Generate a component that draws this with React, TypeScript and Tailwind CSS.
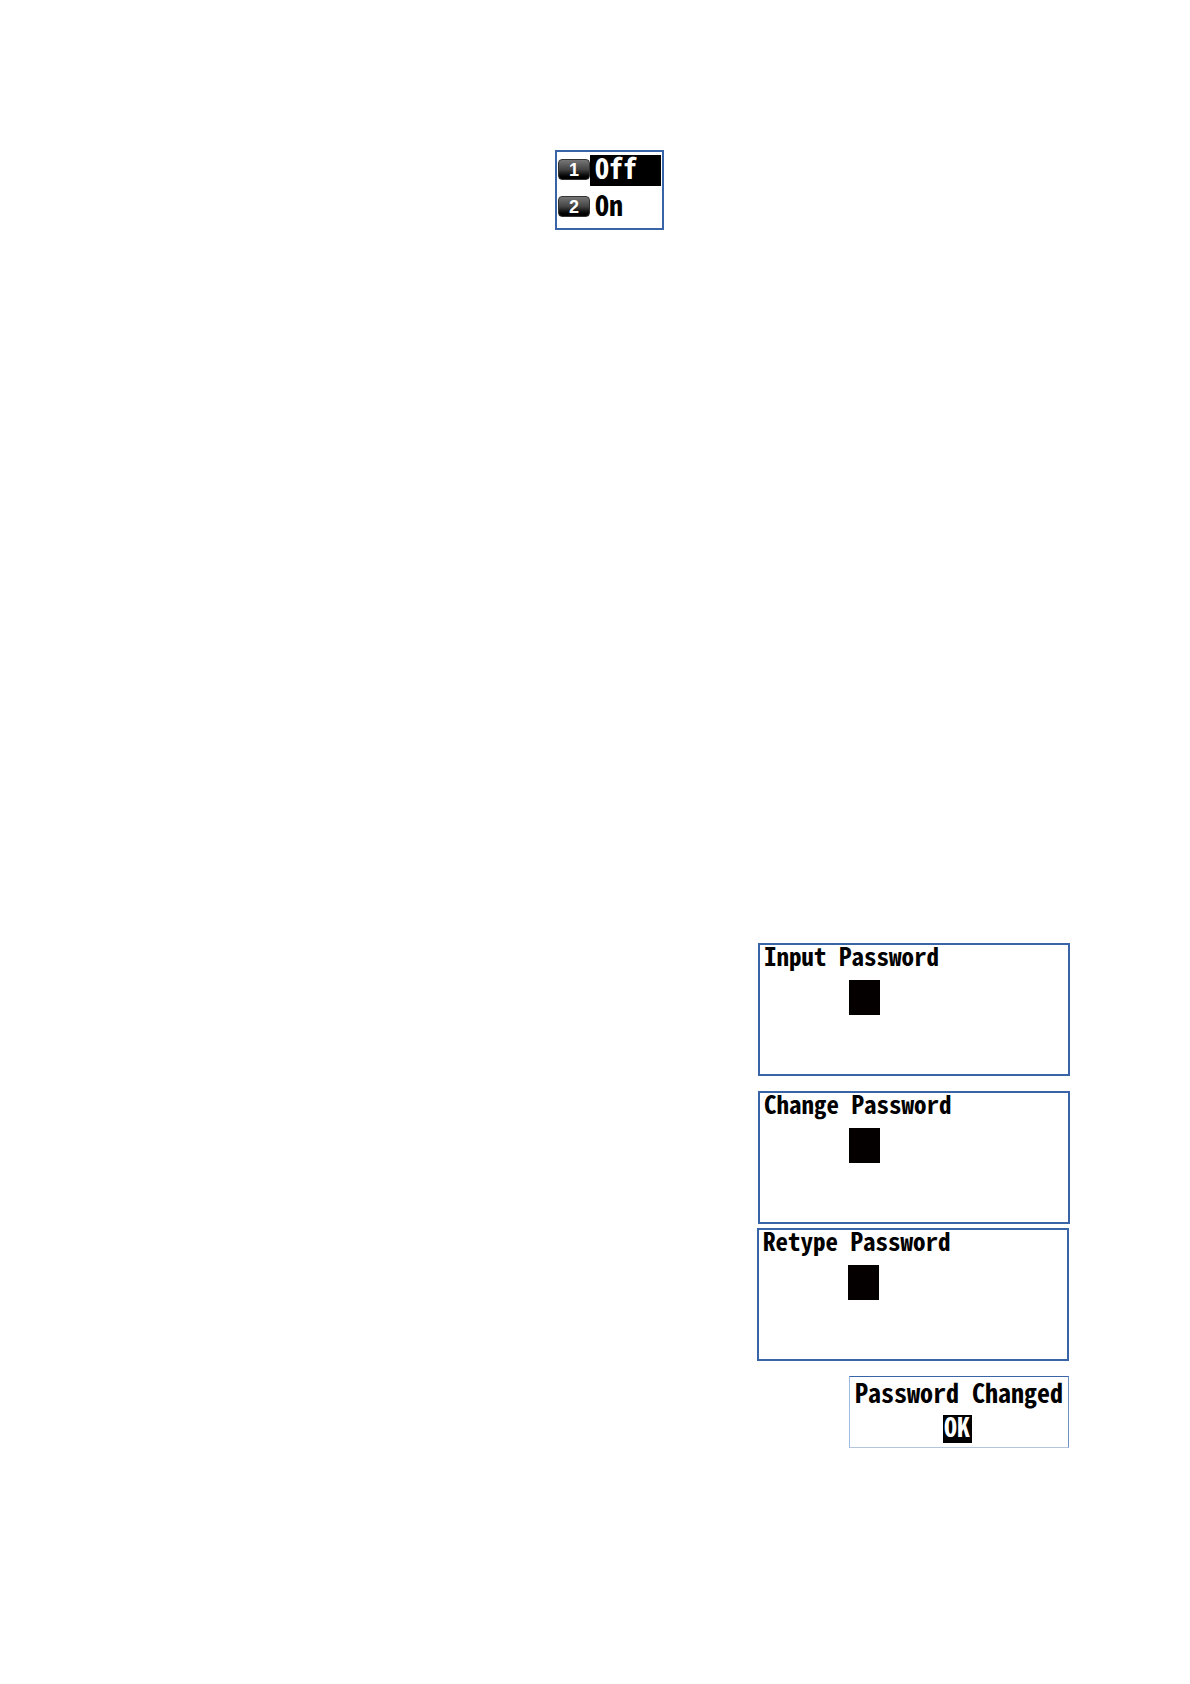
import { useId } from "react";

function MenuItem({ number, label, selected = false }: { number: number; label: string; selected?: boolean }) {
  return (
    <button type="button" aria-pressed={selected} className="flex w-full items-start text-left">
      <span className="mt-1 flex h-[21px] w-8 shrink-0 items-center justify-center rounded border border-[#333] bg-linear-to-b from-[#777] via-[#444] to-black font-['Liberation_Sans',sans-serif] text-lg leading-none font-bold text-white">
        {number}
      </span>
      <span className={selected ? "h-[31px] grow bg-black pl-[5px] leading-6 text-white" : "h-[31px] grow pl-[5px] leading-6 text-black"}>
        {label}
      </span>
    </button>
  );
}

function PasswordScreen({ title, className }: { title: string; className: string }) {
  const id = useId();
  return (
    <form className={`flex min-h-[133px] w-[312px] flex-col border-2 border-[#3964a8] ${className}`}>
      <label htmlFor={id} className="h-[35px] whitespace-pre pl-1 leading-5">
        {title}
      </label>
      <input id={id} type="password" className="ml-[89px] h-[35px] w-[31px] bg-[#050000] px-1 text-white outline-none" />
    </form>
  );
}

export default function App() {
  return (
    <main className="flex min-h-screen flex-col bg-white pt-[150px] pr-[120px] pb-20 pl-[149px] font-['Noto_Sans_Mono_CJK_JP','DejaVu_Sans_Mono',monospace] text-[25px] font-bold text-black">
      <nav aria-label="Setting" className="flex w-[109px] flex-col gap-[6px] self-center border-2 border-[#3964a8] pt-[3px] pr-px pb-[5px] pl-px text-[28px]">
        <MenuItem number={1} label="Off" selected />
        <MenuItem number={2} label="On" />
      </nav>

      <section className="mt-[713px] flex flex-col items-end">
        <PasswordScreen title="Input Password" className="" />
        <PasswordScreen title="Change Password" className="mt-[15px]" />
        <PasswordScreen title="Retype Password" className="mt-1 mr-px" />
        <div role="alertdialog" aria-label="Password Changed" className="mt-[15px] mr-px flex min-h-[72px] w-[220px] flex-col items-center border border-t-[#3964a8] border-r-[#6b91c5] border-b-[#b4c5dc] border-l-[#a0bbdf]">
          <p className="h-[38px] whitespace-pre text-[26px] leading-[30px]">Password Changed</p>
          <button type="button" className="mr-1 flex h-7 w-[29px] items-start justify-center bg-black text-[26px] leading-[22px] text-white">
            OK
          </button>
        </div>
      </section>
    </main>
  );
}
